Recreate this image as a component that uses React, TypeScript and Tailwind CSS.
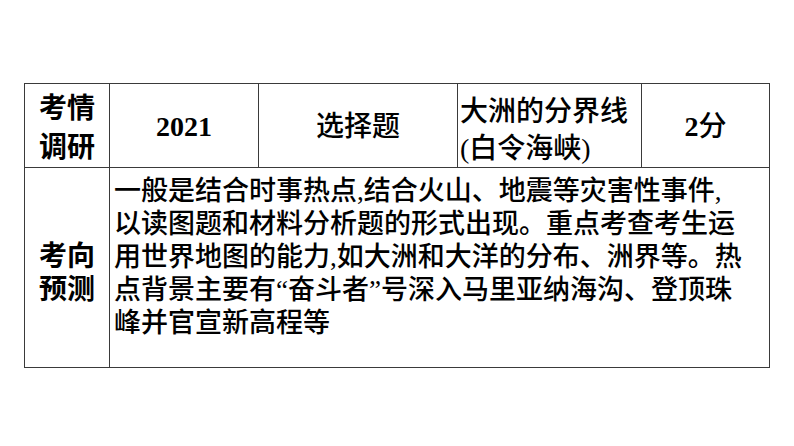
const font = "font-['Liberation_Serif','Noto_Sans_CJK_SC',sans-serif]";

const bodyLines = [
  "一般是结合时事热点,结合火山、地震等灾害性事件,",
  "以读图题和材料分析题的形式出现。重点考查考生运",
  "用世界地图的能力,如大洲和大洋的分布、洲界等。热",
  "点背景主要有“奋斗者”号深入马里亚纳海沟、登顶珠",
  "峰并官宣新高程等",
];

export default function App() {
  return (
    <div className={`w-[794px] h-[446px] bg-white pt-[83px] pl-[24px] text-black ${font}`}>
      <table className="table-fixed border-collapse w-[745px] text-[28px]">
        <colgroup>
          <col className="w-[85px]" />
          <col className="w-[149px]" />
          <col className="w-[199px]" />
          <col className="w-[184px]" />
          <col className="w-[128px]" />
        </colgroup>
        <tbody>
          <tr className="h-[83px]">
            <td className="border border-[#3a3a3a] text-center align-top font-bold p-0 pt-[5px] leading-[39px]">
              考情
              <br />
              调研
            </td>
            <td className="border border-[#3a3a3a] text-center align-middle font-bold p-0 pt-[2px]">2021</td>
            <td className="border border-[#3a3a3a] text-center align-middle font-medium p-0 pt-[2px]">选择题</td>
            <td className="border border-[#3a3a3a] align-top font-medium p-0 pl-[2px] pt-[9px] leading-[37px]">
              大洲的分界线
              <br />
              (白令海峡)
            </td>
            <td className="border border-[#3a3a3a] text-center align-middle p-0 pt-[2px]">
              <span className="font-bold">2</span>
              <span className="font-medium">分</span>
            </td>
          </tr>
          <tr className="h-[200px]">
            <td className="border border-[#3a3a3a] text-center align-middle font-bold leading-[33px] p-0 pt-[10px]">
              考向
              <br />
              预测
            </td>
            <td
              colSpan={4}
              className="border border-[#3a3a3a] align-top font-medium text-[27px] leading-[33px] p-0 pl-[4px] pt-[7px] whitespace-nowrap"
            >
              {bodyLines.map((line) => (
                <div key={line}>{line}</div>
              ))}
            </td>
          </tr>
        </tbody>
      </table>
    </div>
  );
}
